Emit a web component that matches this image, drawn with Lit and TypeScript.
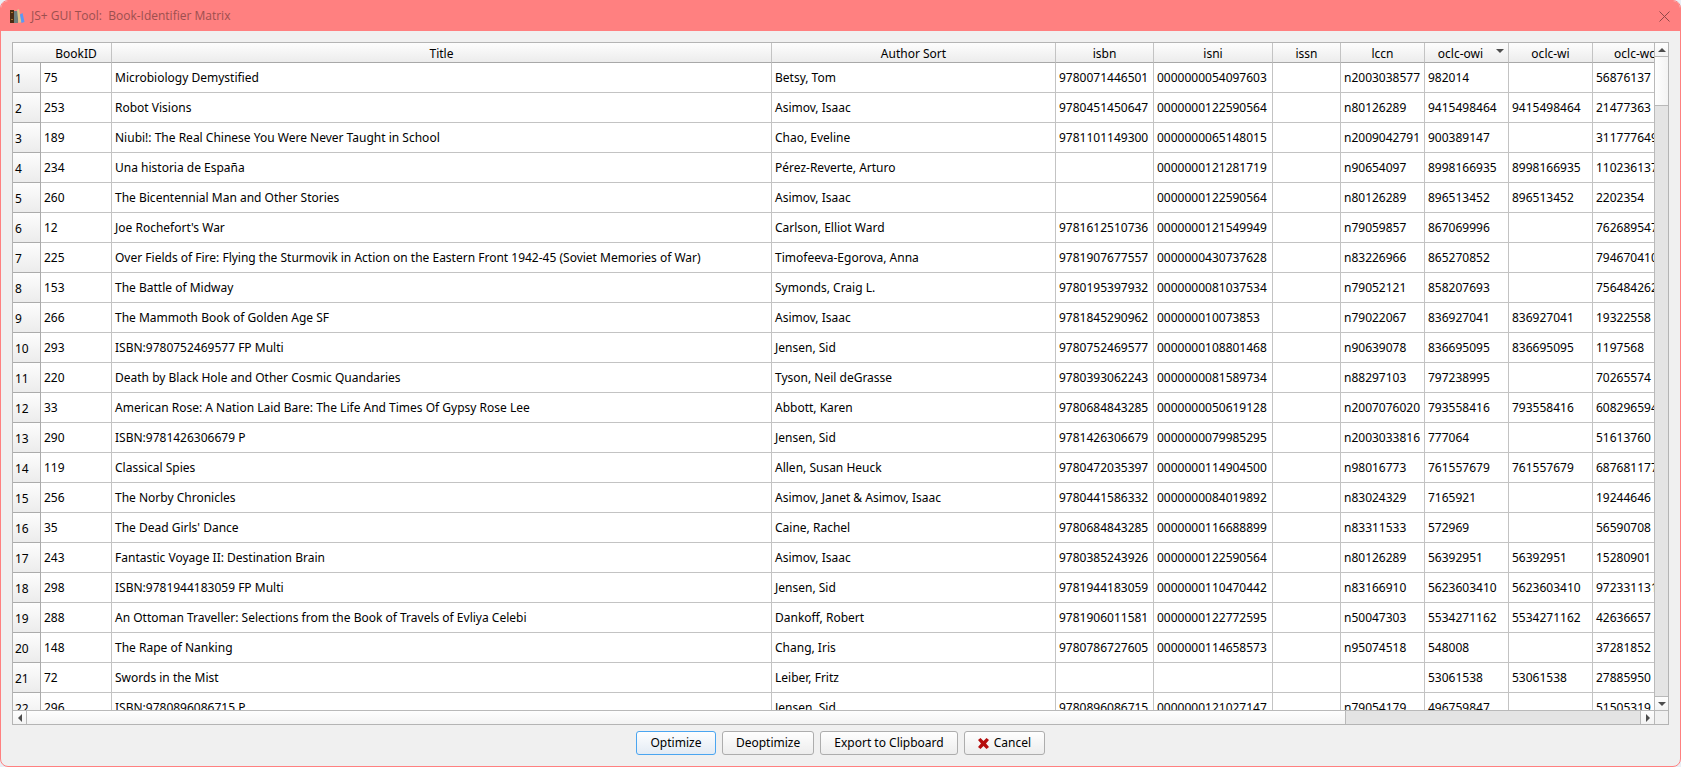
import { LitElement, html, css, svg } from "lit";
import { customElement, property, state } from "lit/decorators.js";

interface Column {
  label: string;
  cls: string;
  sorted?: boolean;
}

const COLUMNS: Column[] = [
  { label: "BookID", cls: "c-id" },
  { label: "Title", cls: "c-title" },
  { label: "Author Sort", cls: "c-author" },
  { label: "isbn", cls: "c-isbn" },
  { label: "isni", cls: "c-isni" },
  { label: "issn", cls: "c-issn" },
  { label: "lccn", cls: "c-num" },
  { label: "oclc-owi", cls: "c-num", sorted: true },
  { label: "oclc-wi", cls: "c-num" },
  { label: "oclc-wc", cls: "c-num" },
];

const BOOKS: string[][] = [
  ["75", "Microbiology Demystified", "Betsy, Tom", "9780071446501", "0000000054097603", "", "n2003038577", "982014", "", "56876137"],
  ["253", "Robot Visions", "Asimov, Isaac", "9780451450647", "0000000122590564", "", "n80126289", "9415498464", "9415498464", "21477363"],
  ["189", "Niubi!: The Real Chinese You Were Never Taught in School", "Chao, Eveline", "9781101149300", "0000000065148015", "", "n2009042791", "900389147", "", "311777649"],
  ["234", "Una historia de España", "Pérez-Reverte, Arturo", "", "0000000121281719", "", "n90654097", "8998166935", "8998166935", "110236137"],
  ["260", "The Bicentennial Man and Other Stories", "Asimov, Isaac", "", "0000000122590564", "", "n80126289", "896513452", "896513452", "2202354"],
  ["12", "Joe Rochefort's War", "Carlson, Elliot Ward", "9781612510736", "0000000121549949", "", "n79059857", "867069996", "", "762689547"],
  ["225", "Over Fields of Fire: Flying the Sturmovik in Action on the Eastern Front 1942-45 (Soviet Memories of War)", "Timofeeva-Egorova, Anna", "9781907677557", "0000000430737628", "", "n83226966", "865270852", "", "794670410"],
  ["153", "The Battle of Midway", "Symonds, Craig L.", "9780195397932", "0000000081037534", "", "n79052121", "858207693", "", "756484262"],
  ["266", "The Mammoth Book of Golden Age SF", "Asimov, Isaac", "9781845290962", "000000010073853", "", "n79022067", "836927041", "836927041", "19322558"],
  ["293", "ISBN:9780752469577 FP Multi", "Jensen, Sid", "9780752469577", "0000000108801468", "", "n90639078", "836695095", "836695095", "1197568"],
  ["220", "Death by Black Hole and Other Cosmic Quandaries", "Tyson, Neil deGrasse", "9780393062243", "0000000081589734", "", "n88297103", "797238995", "", "70265574"],
  ["33", "American Rose: A Nation Laid Bare: The Life And Times Of Gypsy Rose Lee", "Abbott, Karen", "9780684843285", "0000000050619128", "", "n2007076020", "793558416", "793558416", "608296594"],
  ["290", "ISBN:9781426306679 P", "Jensen, Sid", "9781426306679", "0000000079985295", "", "n2003033816", "777064", "", "51613760"],
  ["119", "Classical Spies", "Allen, Susan Heuck", "9780472035397", "0000000114904500", "", "n98016773", "761557679", "761557679", "687681177"],
  ["256", "The Norby Chronicles", "Asimov, Janet & Asimov, Isaac", "9780441586332", "0000000084019892", "", "n83024329", "7165921", "", "19244646"],
  ["35", "The Dead Girls' Dance", "Caine, Rachel", "9780684843285", "0000000116688899", "", "n83311533", "572969", "", "56590708"],
  ["243", "Fantastic Voyage II: Destination Brain", "Asimov, Isaac", "9780385243926", "0000000122590564", "", "n80126289", "56392951", "56392951", "15280901"],
  ["298", "ISBN:9781944183059 FP Multi", "Jensen, Sid", "9781944183059", "0000000110470442", "", "n83166910", "5623603410", "5623603410", "972331131"],
  ["288", "An Ottoman Traveller: Selections from the Book of Travels of Evliya Celebi", "Dankoff, Robert", "9781906011581", "0000000122772595", "", "n50047303", "5534271162", "5534271162", "42636657"],
  ["148", "The Rape of Nanking", "Chang, Iris", "9780786727605", "0000000114658573", "", "n95074518", "548008", "", "37281852"],
  ["72", "Swords in the Mist", "Leiber, Fritz", "", "", "", "", "53061538", "53061538", "27885950"],
  ["296", "ISBN:9780896086715 P", "Jensen, Sid", "9780896086715", "0000000121027147", "", "n79054179", "496759847", "", "51505319"],
];

const booksIcon = svg`
  <rect x="0" y="1" width="4" height="13" fill="#4a2c12"/>
  <rect x="1" y="3" width="2" height="1" fill="#a8742c"/>
  <rect x="1" y="10" width="2" height="1" fill="#a8742c"/>
  <rect x="4" y="2" width="4" height="12" fill="#6d7f7d"/>
  <path d="M7 1l2-1 2.500 13-3 1z" fill="#dcc58a"/>
  <path d="M10 5.500l2.500-1.500 2 9-3 1z" fill="#5b98f5"/>`;

@customElement("scroll-strip")
export class ScrollStrip extends LitElement {
  @property({ type: Boolean, reflect: true }) vertical = false;
  @property({ type: Number }) extent = 50;

  static styles = css`
    :host {
      display: flex;
      border-top: 1px solid #b9b9b9;
      background: #e4e4e4;
      box-sizing: border-box;
      min-width: 0;
      min-height: 0;
    }
    :host([vertical]) {
      flex-direction: column;
      border-top: 0;
      border-left: 1px solid #b9b9b9;
    }
    .arrow {
      flex: none;
      display: grid;
      place-items: center;
      width: 13px;
      height: 13px;
      padding: 0;
      border: 0;
      background: linear-gradient(#fefefe, #f3f3f3);
    }
    .arrow svg {
      display: block;
      fill: #4d4d4d;
    }
    .track {
      flex: 1;
      min-width: 0;
      min-height: 0;
      border: solid #b9b9b9;
      border-width: 0 1px;
    }
    .thumb {
      box-sizing: border-box;
      height: 100%;
      background: linear-gradient(#fefefe, #f3f3f3);
      border-right: 1px solid #b9b9b9;
    }
    :host([vertical]) .track {
      border-width: 1px 0;
    }
    :host([vertical]) .thumb {
      border-right: 0;
      border-bottom: 1px solid #b9b9b9;
      background: linear-gradient(90deg, #fefefe, #f3f3f3);
    }
  `;

  render() {
    const [back, next] = this.vertical
      ? ["M0 6L4 2l4 4z", "M0 2l4 4 4-4z"]
      : ["M6 0L2 4l4 4z", "M2 0l4 4-4 4z"];
    const size = this.vertical ? `height:${this.extent}%` : `width:${this.extent}%`;
    return html`
      <button class="arrow" aria-label=${this.vertical ? "Scroll up" : "Scroll left"}>
        <svg width="8" height="8" viewBox="0 0 8 8"><path d=${back} /></svg>
      </button>
      <div class="track"><div class="thumb" style=${size}></div></div>
      <button class="arrow" aria-label=${this.vertical ? "Scroll down" : "Scroll right"}>
        <svg width="8" height="8" viewBox="0 0 8 8"><path d=${next} /></svg>
      </button>
    `;
  }
}

@customElement("app-root")
export class AppRoot extends LitElement {
  @state() private books = BOOKS;

  static styles = css`
    :host {
      display: block;
      height: 100vh;
      background: #e9eef5;
      color: #000;
      font: 12px/16px "Noto Sans", sans-serif;
    }
    .window {
      box-sizing: border-box;
      display: flex;
      flex-direction: column;
      height: 100%;
      border: 1px solid #ff8080;
      border-radius: 8px;
      overflow: hidden;
      background: #f0f0f0;
    }
    .titlebar {
      flex: none;
      display: flex;
      align-items: center;
      height: 30px;
      padding: 0 10px 0 9px;
      background: #ff8080;
      color: #9c4f4f;
      font: 12px/16px "Open Sans", "Noto Sans", sans-serif;
    }
    .titlebar h1 {
      flex: 1;
      margin: 0 0 0 6px;
      font: inherit;
      white-space: pre;
    }
    .icon,
    .close svg {
      display: block;
    }
    .close {
      padding: 0;
      border: 0;
      background: none;
    }
    .content {
      flex: 1;
      min-height: 0;
      display: flex;
      flex-direction: column;
      gap: 6px;
      padding: 11px;
    }
    .grid {
      flex: 1;
      min-height: 0;
      display: grid;
      grid-template-columns: minmax(0, 1fr) 14px;
      grid-template-rows: minmax(0, 1fr) 14px;
      border: 1px solid #b4b4b4;
      background: #fff;
    }
    .viewport {
      overflow: hidden;
    }
    .corner {
      border: solid #b9b9b9;
      border-width: 1px 0 0 1px;
      background: #f0f0f0;
    }
    table {
      table-layout: fixed;
      width: calc(100% + 23px);
      border-collapse: separate;
      border-spacing: 0;
    }
    th,
    td {
      box-sizing: border-box;
      height: 30px;
      padding: 0 3px;
      border: solid #c3c3c3;
      border-width: 0 1px 1px 0;
      text-align: left;
      font-weight: normal;
      white-space: nowrap;
      overflow: hidden;
    }
    thead th {
      height: 20px;
      padding: 2px 0 0;
      border-bottom-color: #a8a8a8;
      background: linear-gradient(#fdfdfd, #ececec);
      text-align: center;
    }
    thead .c-row {
      border-right: 0;
    }
    tbody th {
      padding: 2px 2px 0;
      border-color: #ababab;
      background: linear-gradient(#fdfdfd, #ececec);
    }
    .c-row {
      width: 28px;
    }
    .c-id {
      width: 71px;
    }
    .c-author {
      width: 284px;
    }
    .c-isbn {
      width: 98px;
    }
    .c-isni {
      width: 119px;
    }
    .c-issn {
      width: 68px;
    }
    .c-num {
      width: 84px;
    }
    .sorted {
      display: flex;
      align-items: center;
      padding-right: 4px;
    }
    .sorted span {
      flex: 1;
    }
    .sorted svg {
      flex: none;
      margin-bottom: 5px;
      fill: #4d4d4d;
    }
    .actions {
      flex: none;
      display: flex;
      justify-content: center;
      gap: 6px;
    }
    .action {
      box-sizing: border-box;
      display: flex;
      align-items: center;
      justify-content: center;
      gap: 5px;
      min-width: 80px;
      height: 24px;
      padding: 0 13px;
      border: 1px solid #adadad;
      border-radius: 3px;
      background: linear-gradient(#fefefe, #ededed);
      color: inherit;
      font: inherit;
    }
    .action.default {
      border-color: #4aa5f0;
      background: linear-gradient(#fdfeff, #e3ebf4);
    }
  `;

  private renderHeader(col: Column) {
    return html`<th scope="col" class=${col.cls} aria-sort=${col.sorted ? "descending" : "none"}>
      ${col.sorted
        ? html`<div class="sorted">
            <span>${col.label}</span>
            <svg width="8" height="4" viewBox="0 0 8 4"><path d="M0 0h8L4 4z" /></svg>
          </div>`
        : col.label}
    </th>`;
  }

  render() {
    return html`
      <main class="window">
        <header class="titlebar">
          <svg class="icon" width="15" height="15" viewBox="0 0 15 15">${booksIcon}</svg>
          <h1>JS+ GUI Tool:  Book-Identifier Matrix</h1>
          <button class="close" aria-label="Close">
            <svg width="11" height="11" viewBox="0 0 11 11">
              <path d="M.5.5l10 10M10.500.5l-10 10" stroke="#8f4848" fill="none" />
            </svg>
          </button>
        </header>
        <div class="content">
          <div class="grid">
            <div class="viewport">
              <table>
                <thead>
                  <tr>
                    <th class="c-row"></th>
                    ${COLUMNS.map((c) => this.renderHeader(c))}
                  </tr>
                </thead>
                <tbody>
                  ${this.books.map(
                    (book, i) => html`<tr>
                      <th scope="row">${i + 1}</th>
                      ${book.map((value) => html`<td>${value}</td>`)}
                    </tr>`
                  )}
                </tbody>
              </table>
            </div>
            <scroll-strip vertical .extent=${7.7}></scroll-strip>
            <scroll-strip .extent=${81.8}></scroll-strip>
            <div class="corner"></div>
          </div>
          <div class="actions">
            <button class="action default">Optimize</button>
            <button class="action">Deoptimize</button>
            <button class="action">Export to Clipboard</button>
            <button class="action">
              <svg width="11" height="11" viewBox="0 0 11 11">
                <path
                  d="M0 2L2.500 0 5.500 3 8.500 0 11 2 8 5.500 11 9 8.500 11 5.500 8 2.500 11 0 9 3 5.500z"
                  fill="#b50d0d"
                />
              </svg>
              Cancel
            </button>
          </div>
        </div>
      </main>
    `;
  }
}
